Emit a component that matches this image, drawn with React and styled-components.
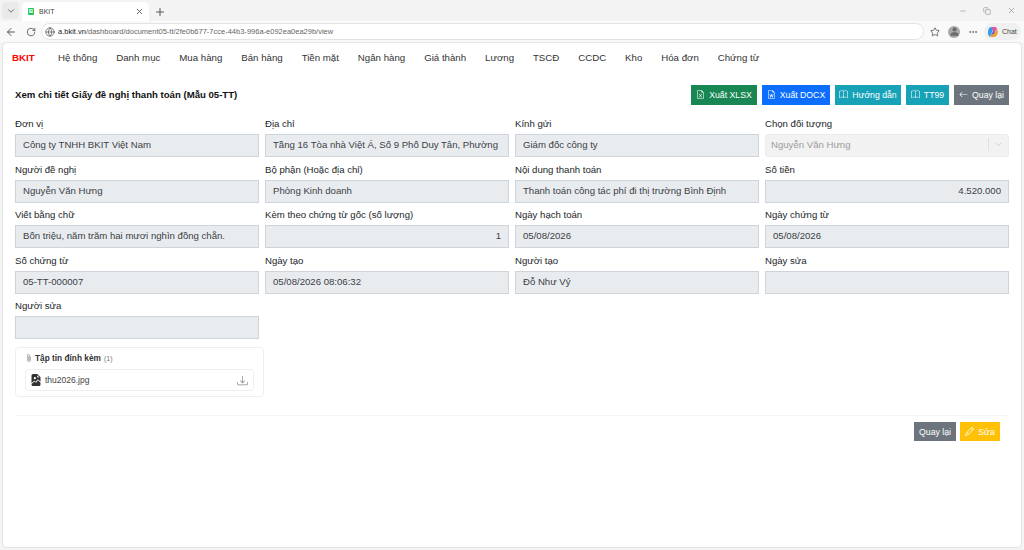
import React from "react";
import styled, { createGlobalStyle } from "styled-components";
import {
  ChevronDown,
  X,
  Plus,
  ArrowLeft,
  RotateCw,
  Globe,
  Star,
  MoreHorizontal,
  Minus,
  Copy,
} from "lucide-react";
import {
  BsFileEarmarkExcel,
  BsFileEarmarkWord,
  BsBook,
  BsArrowLeft,
  BsPencil,
  BsPaperclip,
  BsFileEarmarkImageFill,
  BsDownload,
  BsPersonFill,
} from "react-icons/bs";

const GlobalStyle = createGlobalStyle`
  html, body {
    margin: 0;
    padding: 0;
    height: 100%;
    overflow: hidden;
    background: #f3f3f3;
    font-family: "Liberation Sans", Arial, sans-serif;
  }
  * { box-sizing: border-box; }
`;

const Shell = styled.div`
  width: 1024px;
  height: 550px;
  display: flex;
  flex-direction: column;
  background: #f3f3f3;
`;

// browser chrome
const TabStrip = styled.div`
  height: 21px;
  display: flex;
  align-items: flex-end;
  padding-left: 2px;
  color: #555;
`;

const TabMenu = styled.div`
  width: 17px;
  height: 17px;
  margin: 0 3px 2px 0;
  border-radius: 4px;
  background: #eaeaea;
  display: flex;
  align-items: center;
  justify-content: center;
`;

const Tab = styled.div`
  width: 127px;
  height: 19px;
  background: #fff;
  border-radius: 5px 5px 0 0;
  display: flex;
  align-items: center;
  padding: 0 5px 0 6px;
  font-size: 7px;
  color: #444;
`;

const Favicon = styled.span`
  width: 6px;
  height: 7px;
  margin-right: 5px;
  border-radius: 1px;
  background: #22c55e;
  color: #fff;
  font-size: 6px;
  font-weight: 700;
  line-height: 7px;
  text-align: center;
`;

const TabTitle = styled.span`
  flex: 1;
`;

const NewTab = styled.div`
  width: 21px;
  height: 19px;
  display: flex;
  align-items: center;
  justify-content: center;
`;

const WindowButtons = styled.div`
  margin: 0 8px 0 auto;
  height: 21px;
  display: flex;
  align-items: center;
  gap: 16px;
  color: #9a9a9a;
`;

const Toolbar = styled.div`
  height: 21px;
  display: flex;
  align-items: center;
  background: #f9f9f9;
  padding: 0 3px 0 5px;
  color: #555;
`;

const ToolIcon = styled.span`
  display: flex;
  align-items: center;
  margin-right: ${({ $gap }) => $gap || 0}px;
  margin-left: ${({ $lead }) => $lead || 0}px;
`;

const AddressBar = styled.div`
  width: 883px;
  height: 17px;
  background: #fff;
  border: 1px solid #e3e3e3;
  border-radius: 9px;
  display: flex;
  align-items: center;
  padding-left: 3px;
  font-size: 7.5px;
  color: #666;
  margin-right: 6px;
`;

const Host = styled.span`
  color: #222;
  margin-left: 3px;
`;

const Avatar = styled.span`
  width: 12px;
  height: 12px;
  border-radius: 50%;
  background: #a8a8a8;
  color: #6b6b6b;
  display: flex;
  align-items: center;
  justify-content: center;
  font-size: 11px;
  overflow: hidden;
`;

const ChatPill = styled.div`
  margin-left: auto;
  width: 37px;
  height: 17px;
  border-radius: 9px;
  background: #f0f0f0;
  display: flex;
  align-items: center;
  gap: 3px;
  padding-left: 3px;
  font-size: 7px;
  color: #444;
`;

// page
const Page = styled.main`
  flex: 1;
  margin: 0 2px 2px 2px;
  background: #fff;
  border: 1px solid #e4e4e4;
  border-radius: 5px;
  overflow: hidden;
  color: #212529;
`;

const Nav = styled.nav`
  height: 29px;
  display: flex;
  align-items: center;
  padding: 0 0 0 9px;
  font-size: 9.7px;
  color: #333;
`;

const Brand = styled.span`
  width: 46px;
  font-weight: 700;
  color: #f00;
`;

const NavLink = styled.span`
  margin-right: 18.9px;
  white-space: nowrap;
`;

const Content = styled.section`
  padding: 12px 12px 0 12px;
`;

const TitleRow = styled.div`
  height: 21px;
  display: flex;
  align-items: center;
  justify-content: space-between;
  margin-bottom: 11px;
`;

const Title = styled.h1`
  margin: 0;
  font-size: 9.6px;
  font-weight: 700;
  color: #111;
`;

const Actions = styled.div`
  display: flex;
  gap: 5px;
`;

const Button = styled.button`
  height: ${({ $h }) => $h || 20}px;
  width: ${({ $w }) => $w}px;
  padding: 0;
  border: 1px solid ${({ $bg }) => $bg};
  background: ${({ $bg }) => $bg};
  color: #fff;
  font-family: inherit;
  font-size: 8.7px;
  display: inline-flex;
  align-items: center;
  justify-content: center;
  gap: 4px;
  white-space: nowrap;

  svg {
    font-size: 9px;
    flex: none;
  }
`;

const Grid = styled.div`
  display: grid;
  grid-template-columns: repeat(4, 244px);
  column-gap: 6px;
  row-gap: 4.6px;
`;

const Field = styled.div`
  display: flex;
  flex-direction: column;
`;

const Label = styled.label`
  height: 18px;
  font-size: 9.6px;
  line-height: 16px;
  color: #212529;
  white-space: nowrap;
`;

const Input = styled.div`
  height: 23px;
  padding: 0 7px;
  background: #e9ecef;
  border: 1px solid #ced4da;
  font-size: 9.6px;
  line-height: 19px;
  color: #3a4046;
  white-space: nowrap;
  overflow: hidden;
  text-align: ${({ $right }) => ($right ? "right" : "left")};
`;

const SelectBox = styled.div`
  height: 23px;
  padding: 0 0 2px 5px;
  background: #f2f2f2;
  border: 1px solid #ececec;
  border-radius: 3px;
  display: flex;
  align-items: center;
  font-size: 9.6px;
  color: #9b9b9b;
`;

const SelectValue = styled.span`
  flex: 1;
`;

const SelectArrow = styled.span`
  width: 20px;
  height: 13px;
  border-left: 1px solid #e0e0e0;
  display: flex;
  align-items: center;
  justify-content: center;
  color: #c4c4c4;
`;

const AttachBox = styled.div`
  width: 249px;
  height: 50px;
  margin-top: 8px;
  padding: 3px 9px 0 9px;
  border: 1px solid #efefef;
  border-radius: 4px;
`;

const AttachHead = styled.div`
  height: 14px;
  display: flex;
  align-items: center;
  gap: 2px;
  font-size: 8.3px;
  font-weight: 700;
  color: #333;

  svg {
    font-size: 8px;
    color: #777;
  }
`;

const AttachCount = styled.span`
  font-weight: 400;
  font-size: 7px;
  color: #777;
  margin-left: 1px;
`;

const FileRow = styled.div`
  height: 22px;
  margin-top: 4px;
  padding: 0 5px 0 4px;
  border: 1px solid #efefef;
  border-radius: 3px;
  display: flex;
  align-items: center;
  font-size: 8.5px;
  color: #444;
`;

const FileName = styled.span`
  flex: 1;
  margin-left: 3px;
`;

const FileIcon = styled.span`
  display: flex;
  font-size: 12px;
  color: #333;
`;

const DownloadIcon = styled.span`
  display: flex;
  font-size: 11px;
  color: #888;
`;

const Footer = styled.footer`
  margin-top: 18px;
  padding: 6px 9px 0 0;
  border-top: 1px solid #f5f5f5;
  display: flex;
  justify-content: flex-end;
  gap: 4px;
`;

const fields = [
  ["Đơn vị", "Công ty TNHH BKIT Việt Nam"],
  ["Địa chỉ", "Tầng 16 Tòa nhà Việt Á, Số 9 Phố Duy Tân, Phường"],
  ["Kính gửi", "Giám đốc công ty"],
  ["Chọn đối tượng", "Nguyễn Văn Hưng", "select"],
  ["Người đề nghị", "Nguyễn Văn Hưng"],
  ["Bộ phận (Hoặc địa chỉ)", "Phòng Kinh doanh"],
  ["Nội dung thanh toán", "Thanh toán công tác phí đi thị trường Bình Định"],
  ["Số tiền", "4.520.000", "right"],
  ["Viết bằng chữ", "Bốn triệu, năm trăm hai mươi nghìn đồng chẵn."],
  ["Kèm theo chứng từ gốc (số lượng)", "1", "right"],
  ["Ngày hạch toán", "05/08/2026"],
  ["Ngày chứng từ", "05/08/2026"],
  ["Số chứng từ", "05-TT-000007"],
  ["Ngày tạo", "05/08/2026 08:06:32"],
  ["Người tạo", "Đỗ Như Vý"],
  ["Ngày sửa", ""],
  ["Người sửa", ""],
];

const menu = [
  "Hệ thống",
  "Danh mục",
  "Mua hàng",
  "Bán hàng",
  "Tiền mặt",
  "Ngân hàng",
  "Giá thành",
  "Lương",
  "TSCĐ",
  "CCDC",
  "Kho",
  "Hóa đơn",
  "Chứng từ",
];

const CopilotLogo = () => (
  <svg width="12" height="12" viewBox="0 0 12 12">
    <path d="M1 6 Q1 1 5 1 L7 1 L5 6 L3 11 Q1 10 1 6Z" fill="#2f9be8" />
    <path d="M5 1 L8 1 Q10 1 10 4 L6 6Z" fill="#e0559b" />
    <path d="M6 6 L11 4 Q11 11 7 11 L3 11Z" fill="#f0a030" />
    <path d="M4 9 L6 5 L8 5 L7 8Z" fill="#7a5fd0" />
  </svg>
);

const App = () => {
  return (
    <Shell>
      <GlobalStyle />
      <TabStrip>
        <TabMenu>
          <ChevronDown size={10} />
        </TabMenu>
        <Tab>
          <Favicon>B</Favicon>
          <TabTitle>BKIT</TabTitle>
          <X size={9} />
        </Tab>
        <NewTab>
          <Plus size={12} />
        </NewTab>
        <WindowButtons>
          <Minus size={8} />
          <Copy size={8} />
          <X size={9} />
        </WindowButtons>
      </TabStrip>
      <Toolbar>
        <ToolIcon $gap={9}>
          <ArrowLeft size={12} />
        </ToolIcon>
        <ToolIcon $gap={5}>
          <RotateCw size={10} />
        </ToolIcon>
        <AddressBar>
          <Globe size={10} />
          <Host>a.bkit.vn</Host>
          /dashboard/document05-tt/2fe0b677-7cce-44b3-996a-e092ea0ea29b/view
        </AddressBar>
        <ToolIcon $gap={8}>
          <Star size={10} />
        </ToolIcon>
        <Avatar>
          <BsPersonFill />
        </Avatar>
        <ToolIcon $lead={8}>
          <MoreHorizontal size={10} />
        </ToolIcon>
        <ChatPill>
          <CopilotLogo />
          Chat
        </ChatPill>
      </Toolbar>
      <Page>
        <Nav>
          <Brand>BKIT</Brand>
          {menu.map((item) => (
            <NavLink key={item}>{item}</NavLink>
          ))}
        </Nav>
        <Content>
          <TitleRow>
            <Title>Xem chi tiết Giấy đề nghị thanh toán (Mẫu 05-TT)</Title>
            <Actions>
              <Button $bg="#198754" $w={66}>
                <BsFileEarmarkExcel />
                Xuất XLSX
              </Button>
              <Button $bg="#0d6efd" $w={68}>
                <BsFileEarmarkWord />
                Xuất DOCX
              </Button>
              <Button $bg="#17a2b8" $w={66}>
                <BsBook />
                Hướng dẫn
              </Button>
              <Button $bg="#17a2b8" $w={43}>
                <BsBook />
                TT99
              </Button>
              <Button $bg="#6c757d" $w={55}>
                <BsArrowLeft />
                Quay lại
              </Button>
            </Actions>
          </TitleRow>
          <Grid>
            {fields.map(([label, value, kind]) => (
              <Field key={label}>
                <Label>{label}</Label>
                {kind === "select" ? (
                  <SelectBox>
                    <SelectValue>{value}</SelectValue>
                    <SelectArrow>
                      <ChevronDown size={9} />
                    </SelectArrow>
                  </SelectBox>
                ) : (
                  <Input $right={kind === "right"}>{value}</Input>
                )}
              </Field>
            ))}
          </Grid>
          <AttachBox>
            <AttachHead>
              <BsPaperclip />
              Tập tin đính kèm <AttachCount>(1)</AttachCount>
            </AttachHead>
            <FileRow>
              <FileIcon>
                <BsFileEarmarkImageFill />
              </FileIcon>
              <FileName>thu2026.jpg</FileName>
              <DownloadIcon>
                <BsDownload />
              </DownloadIcon>
            </FileRow>
          </AttachBox>
          <Footer>
            <Button $bg="#6c757d" $w={42} $h={19}>
              Quay lại
            </Button>
            <Button $bg="#ffc107" $w={40} $h={19}>
              <BsPencil />
              Sửa
            </Button>
          </Footer>
        </Content>
      </Page>
    </Shell>
  );
};

export default App;
